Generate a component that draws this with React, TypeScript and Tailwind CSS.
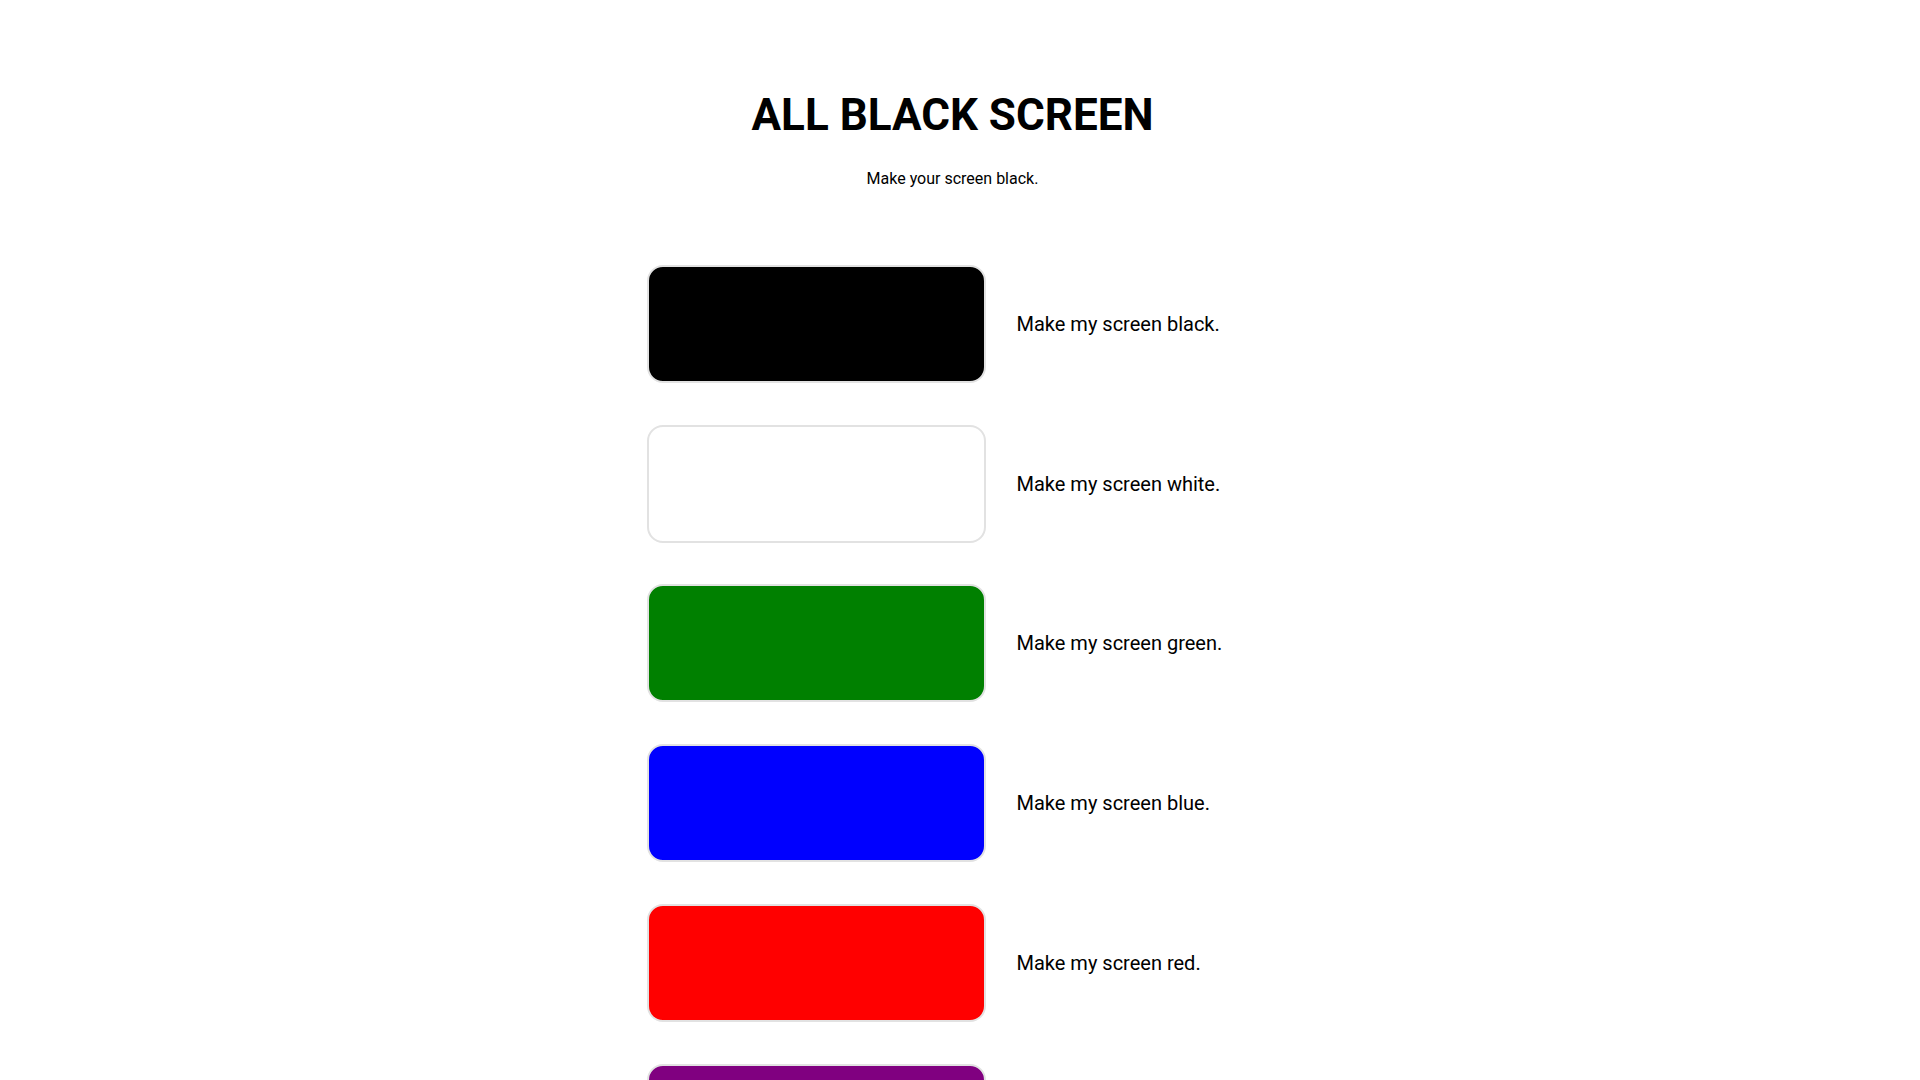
const colors = [
  { name: "black", bg: "bg-[#000000]" },
  { name: "white", bg: "bg-[#ffffff]" },
  { name: "green", bg: "bg-[#008000]" },
  { name: "blue", bg: "bg-[#0000ff]" },
  { name: "red", bg: "bg-[#ff0000]" },
  { name: "purple", bg: "bg-[#800080]" },
  { name: "yellow", bg: "bg-[#ffff00]" },
  { name: "orange", bg: "bg-[#ffa500]" },
  { name: "pink", bg: "bg-[#ffc0cb]" },
  { name: "gray", bg: "bg-[#808080]" },
  { name: "brown", bg: "bg-[#a52a2a]" },
  { name: "cyan", bg: "bg-[#00ffff]" },
  { name: "magenta", bg: "bg-[#ff00ff]" },
  { name: "navy", bg: "bg-[#000080]" },
  { name: "teal", bg: "bg-[#008080]" },
  { name: "maroon", bg: "bg-[#800000]" },
  { name: "olive", bg: "bg-[#808000]" }
];

function ColorRow({ name, bg }: { name: string; bg: string }) {
  return (
    <div className="flex w-[612px] flex-row items-center gap-[31px]">
      <button
        type="button"
        className={`h-[118px] w-[339px] shrink-0 cursor-pointer rounded-[16px] border-2 border-[#e2e2e2] ${bg}`}
        aria-label={`Make my screen ${name}.`}
      />
      <span className="text-[20px] leading-[28px] text-black">
        Make my screen {name}.
      </span>
    </div>
  );
}

export default function App() {
  return (
    <div className="flex min-h-screen w-full flex-col items-center bg-white pr-[15px] pb-[110px] font-['Roboto',sans-serif] text-black">
      <h1 className="mt-[89px] text-[44px] font-bold leading-[1.2]">
        ALL BLACK SCREEN
      </h1>
      <p className="mt-[25px] text-[16px] leading-[24px]">
        Make your screen black.
      </p>

      <div className="mt-[74px] flex flex-col items-center gap-[41.8px]">
        {colors.map((c) => (
          <ColorRow key={c.name} name={c.name} bg={c.bg} />
        ))}
      </div>
    </div>
  );
}
